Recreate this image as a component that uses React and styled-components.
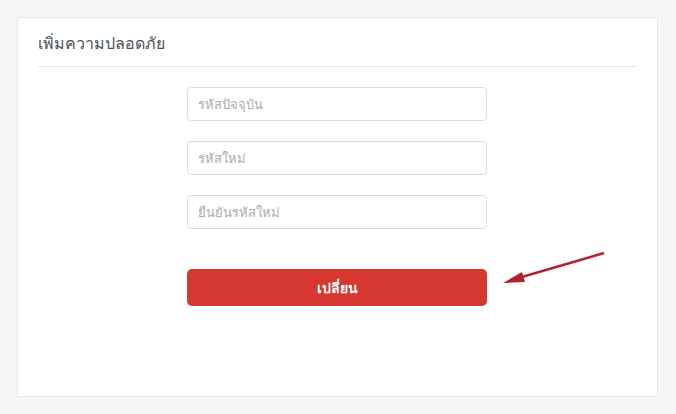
import React from "react";
import styled, { createGlobalStyle } from "styled-components";

const GlobalStyle = createGlobalStyle`
  html, body {
    margin: 0;
    padding: 0;
    background: #f5f6f8;
    font-family: "Noto Sans", "Open Sans", sans-serif;
  }
`;

const Page = styled.div`
  width: 676px;
  height: 414px;
  padding: 17px 18px 17px 17px;
  box-sizing: border-box;
`;

const Card = styled.div`
  position: relative;
  width: 641px;
  height: 380px;
  box-sizing: border-box;
  background: #ffffff;
  border: 1px solid #e7e9ec;
  padding: 0 20px;
`;

const Header = styled.div`
  padding: 13px 0 11px;
  border-bottom: 1px solid #e5e7ea;
`;

const Title = styled.h2`
  margin: 0;
  font-size: 16px;
  font-weight: 400;
  line-height: 24px;
  color: #4b525b;
`;

const Form = styled.form`
  width: 300px;
  margin: 20px 0 0 149px;
  display: flex;
  flex-direction: column;
  gap: 20px;
`;

const Input = styled.input`
  box-sizing: border-box;
  width: 100%;
  height: 34px;
  padding: 0 10px;
  border: 1px solid #d9dcdf;
  border-radius: 4px;
  font-family: inherit;
  font-size: 13px;
  color: #333;
  outline: none;
  &::placeholder {
    color: #a9adb2;
  }
`;

const Button = styled.button`
  margin-top: 20px;
  height: 37px;
  width: 100%;
  border: none;
  border-radius: 5px;
  background: #d63831;
  color: #ffffff;
  font-family: inherit;
  font-size: 14px;
  font-weight: 700;
  cursor: pointer;
`;

const Arrow = styled.svg`
  position: absolute;
  left: 483px;
  top: 233px;
  overflow: visible;
`;

export default function App() {
  return (
    <>
      <GlobalStyle />
      <Page>
        <Card>
          <Header>
            <Title>เพิ่มความปลอดภัย</Title>
          </Header>
          <Form onSubmit={(e) => e.preventDefault()}>
            <Input type="password" placeholder="รหัสปัจจุบัน" />
            <Input type="password" placeholder="รหัสใหม่" />
            <Input type="password" placeholder="ยืนยันรหัสใหม่" />
            <Button type="submit">เปลี่ยน</Button>
          </Form>
          <Arrow width="104" height="34" viewBox="0 0 104 34">
            <line x1="103" y1="2" x2="14" y2="28" stroke="#b3202e" strokeWidth="2.4" />
            <polygon points="2,32 21,21 24,31" fill="#b3202e" />
          </Arrow>
        </Card>
      </Page>
    </>
  );
}
